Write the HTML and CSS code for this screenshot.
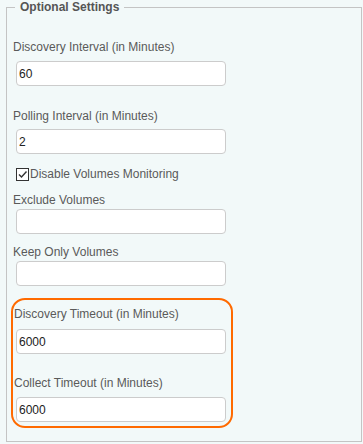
FILE: index.html
```html
<!DOCTYPE html>
<html>
<head>
<meta charset="utf-8">
<link rel="stylesheet" href="styles.css">
</head>
<body>
<fieldset class="settings">
  <legend class="legend">Optional Settings</legend>
  <label class="lbl first">Discovery Interval (in Minutes)</label>
  <input class="inp gap7" type="text" value="60">
  <label class="lbl gap22">Polling Interval (in Minutes)</label>
  <input class="inp gap6" type="text" value="2">
  <div class="check-row">
    <span class="check-box"><svg width="11" height="11" viewBox="0 0 11 11"><path d="M2 5.5 L4.5 8 L9.5 2.5" fill="none" stroke="#333" stroke-width="1.4"/></svg></span>
    <span class="check-text">Disable Volumes Monitoring</span>
  </div>
  <label class="lbl gap11">Exclude Volumes</label>
  <input class="inp gap2" type="text" value="">
  <label class="lbl gap10">Keep Only Volumes</label>
  <input class="inp gap2" type="text" value="">
  <div class="highlight">
    <label class="lbl">Discovery Timeout (in Minutes)</label>
    <input class="inp gap8 in-hl" type="text" value="6000">
    <label class="lbl gap21">Collect Timeout (in Minutes)</label>
    <input class="inp gap7 in-hl" type="text" value="6000">
  </div>
</fieldset>
</body>
</html>
```

FILE: styles.css
```css
html, body {
  margin: 0;
  padding: 0;
  background: #f2f9f9;
}
body {
  font-family: "Liberation Sans", Arial, sans-serif;
  font-size: 12px;
  line-height: 15px;
  color: #5a5a5a;
}
.settings {
  margin: 0 1px 0 6px;
  padding: 0 6px 13px 6px;
  border: 1px solid #c4c4c4;
  min-width: 0;
}
.legend {
  margin-left: 2px;
  padding: 0 5px;
  font-weight: bold;
  font-size: 12px;
  line-height: 15px;
  color: #555;
}
.lbl {
  display: block;
  padding-top: 1px;
  font-size: 12px;
  line-height: 15px;
  color: #5a5a5a;
}
.first { margin-top: 24px; }
.gap22 { margin-top: 22px; }
.gap21 { margin-top: 21px; }
.gap11 { margin-top: 11px; }
.gap10 { margin-top: 10px; }
.gap8 { margin-top: 7px; }
.gap7 { margin-top: 6px; }
.gap6 { margin-top: 5px; }
.gap2 { margin-top: 1px; }
.inp {
  display: block;
  box-sizing: border-box;
  width: 210px;
  height: 25px;
  margin-left: 3px;
  padding: 0 2px;
  border: 1px solid #cccccc;
  border-radius: 4px;
  background: #fff;
  font-family: "Liberation Sans", Arial, sans-serif;
  font-size: 12px;
  color: #222;
  outline: none;
}
.inp.in-hl { margin-left: 2px; }
.check-row {
  display: flex;
  align-items: center;
  margin-top: 12px;
  height: 15px;
  margin-left: 3px;
}
.check-box {
  box-sizing: border-box;
  width: 13px;
  height: 13px;
  border: 1px solid #333;
  background: #fff;
  display: flex;
  align-items: center;
  justify-content: center;
  margin-top: 1px;
}
.check-box svg { display: block; }
.check-text {
  margin-left: 1px;
  padding-top: 2px;
  color: #5a5a5a;
}
.highlight {
  box-sizing: border-box;
  width: 222px;
  margin: 12px 0 0 -2px;
  padding: 6px 0 4px 1px;
  border: 2px solid #ff6a00;
  border-radius: 14px;
}
```
